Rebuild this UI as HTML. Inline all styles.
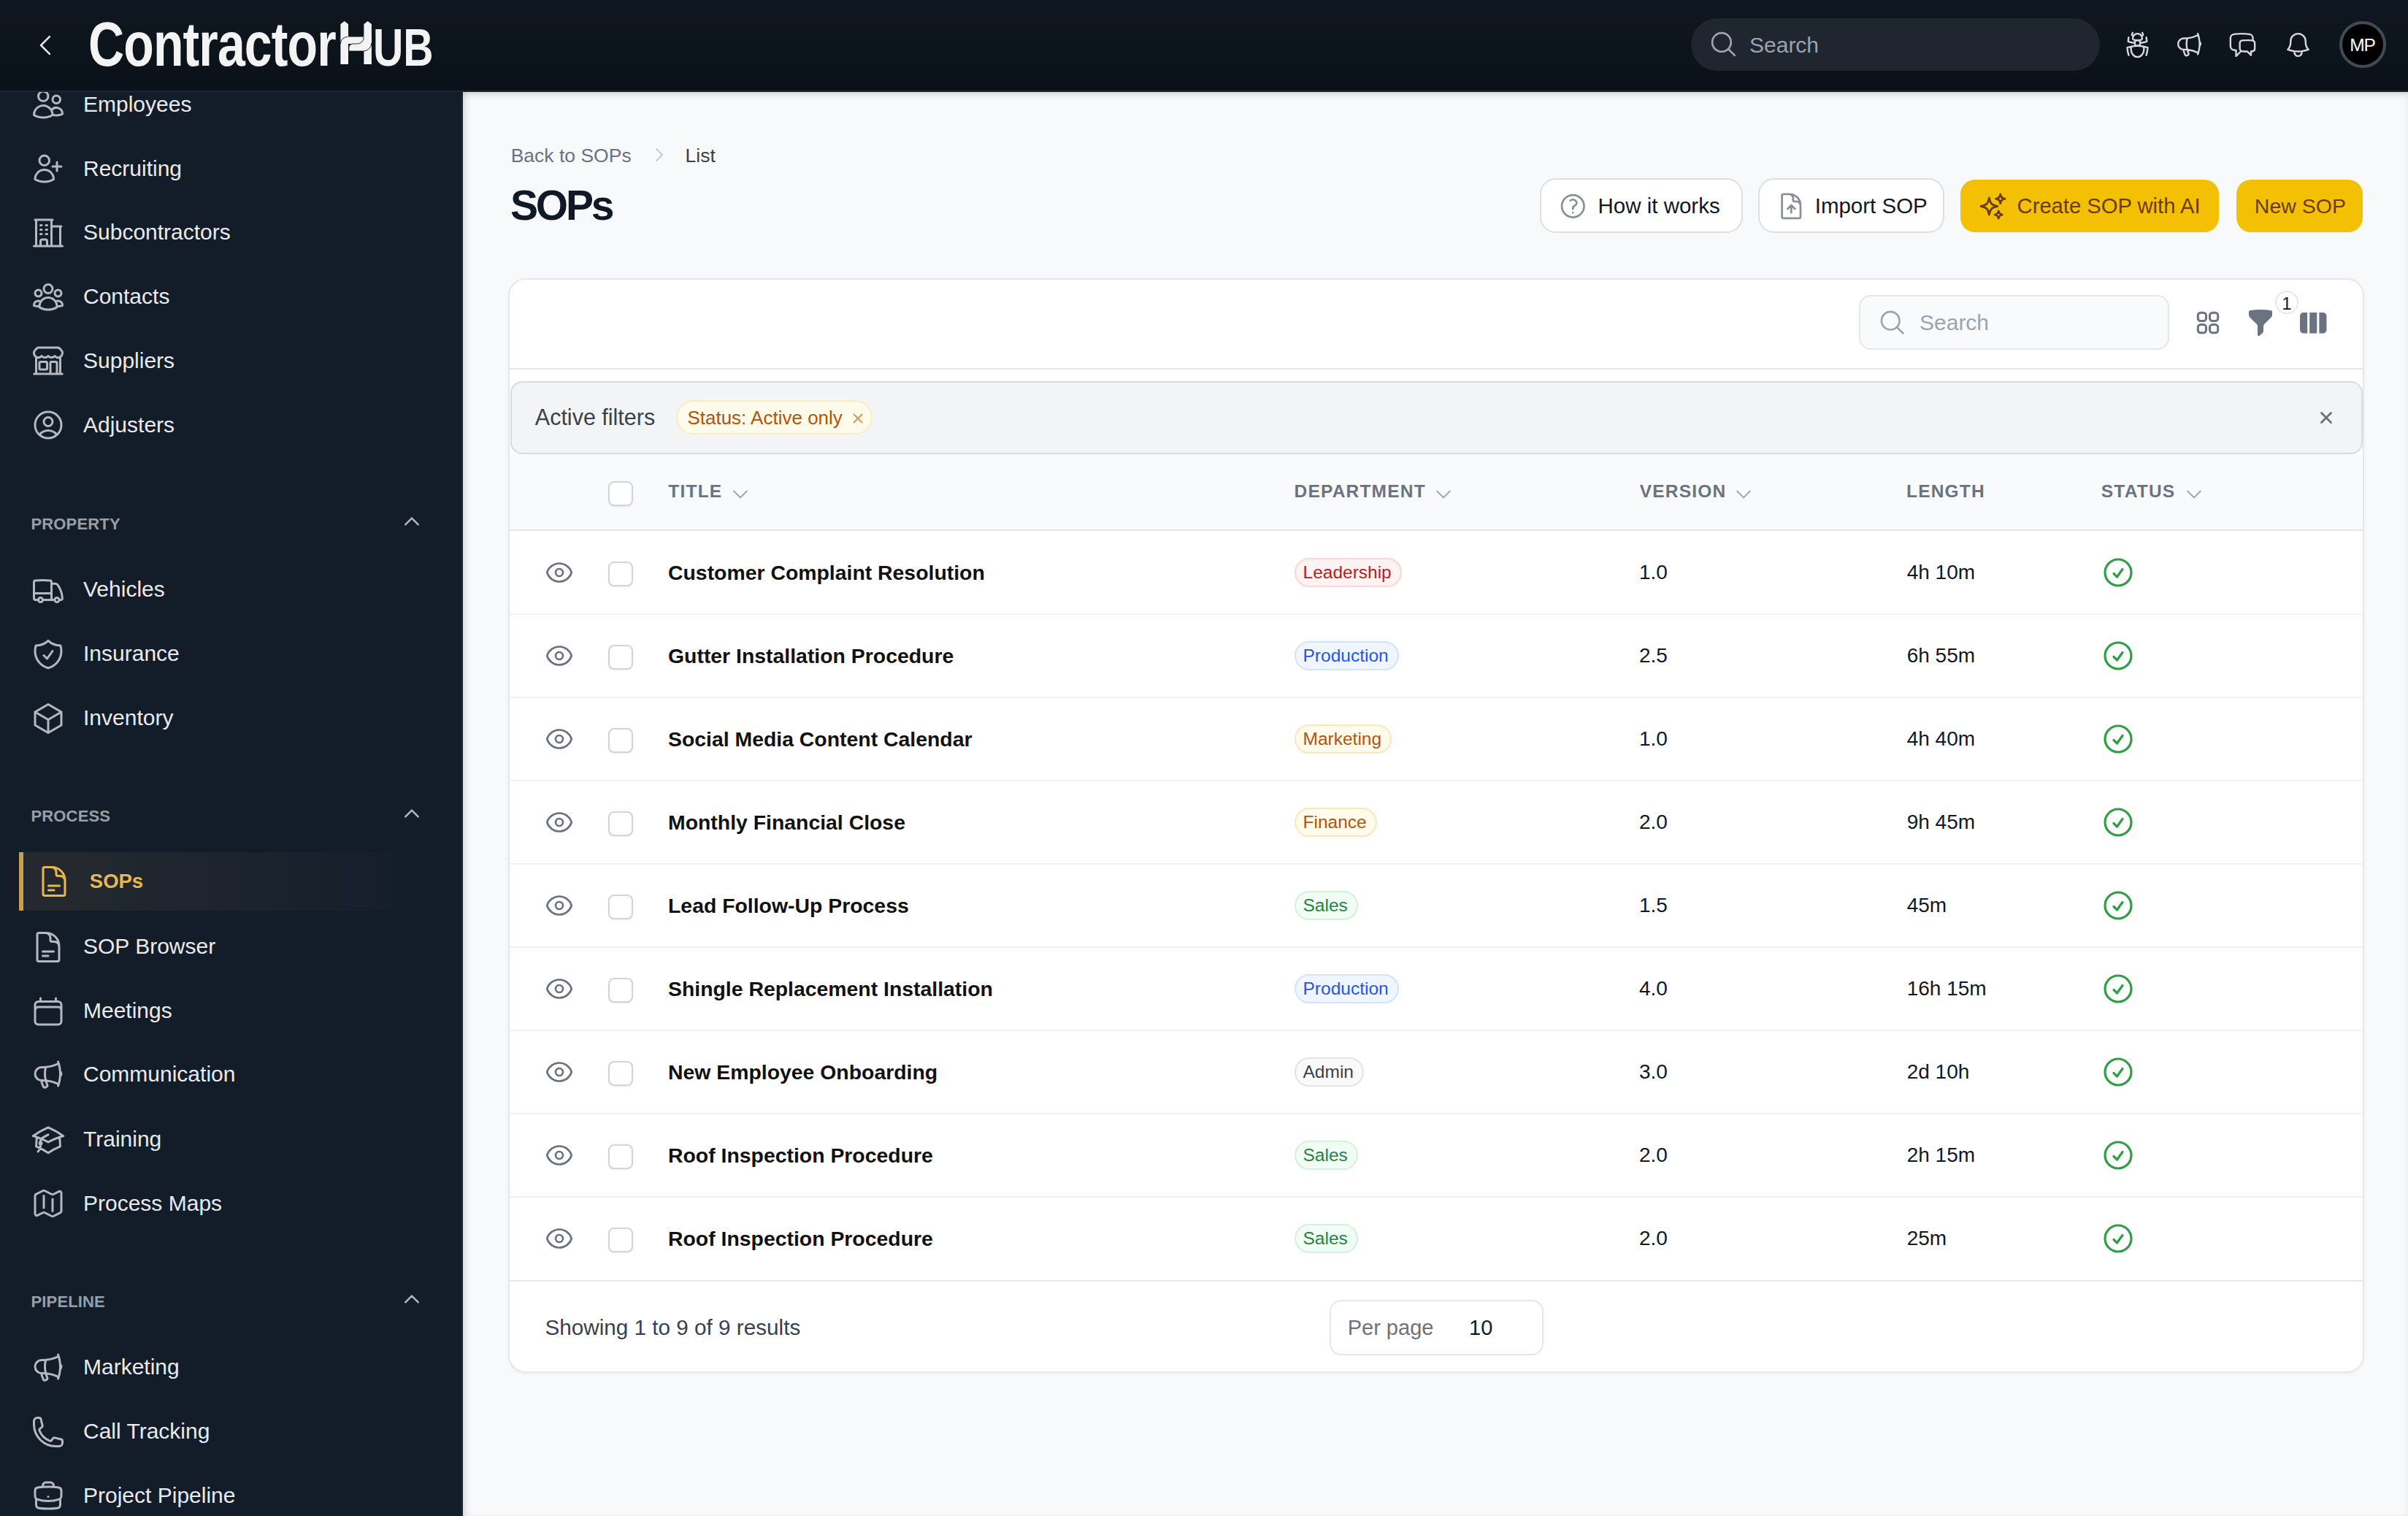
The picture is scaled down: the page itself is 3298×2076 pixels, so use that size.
<!DOCTYPE html><html><head><meta charset="utf-8"><title>SOPs</title><style>
*{margin:0;padding:0;box-sizing:border-box}
html,body{width:3298px;height:2076px;overflow:hidden;background:#f8f9fb;font-family:"Liberation Sans", sans-serif}
.t{position:absolute;line-height:1;white-space:nowrap}
.i{position:absolute;overflow:visible}
.b{position:absolute}
</style></head><body>
<div class="b" style="left:0;top:0;width:3298px;height:124px;background:linear-gradient(180deg,#0f1720 0%,#0a1118 100%)"></div>
<div class="b" style="left:0;top:124px;width:3298px;height:2px;background:#1c2631"></div>
<svg class="i" style="left:43px;top:43px;width:38px;height:38px;" viewBox="0 0 24 24" fill="none" stroke="#e5e7eb" stroke-width="1.6" stroke-linecap="round" stroke-linejoin="round"><path d="M15.75 19.5 8.25 12l7.5-7.5"/></svg>
<div class="t" style="left:120.5px;top:17.5px;font-size:85px;font-weight:700;color:#f3f3f3;letter-spacing:-1.1px;transform:scaleX(0.80);transform-origin:0 0">Contractor</div>
<svg class="i" style="left:455px;top:20px;width:60px;height:75px" viewBox="0 0 60 75"><g fill="#f3f3f3"><path d="M11.4 68 V12.9 L16.7 9 L22 12.9 V68 Z M43.4 68 V12.9 L48.7 9 L53.9 12.9 V68 Z"/><path d="M11.4 40 A9.6 9.6 0 0 1 21 30.4 L53.9 30.4 L53.9 40 L11.4 40 Z"/><path d="M22.9 50 L22.9 45.5 A5.5 5.5 0 0 1 28.4 40 L34.3 40 A9 9 0 0 0 43.3 31 L53.9 31 L53.9 38.5 A11.5 11.5 0 0 1 42.4 50 Z"/></g><g fill="none" stroke="#0b121a" stroke-width="0.9"><path d="M11.4 40 A9.6 9.6 0 0 1 21 30.4"/><path d="M22.9 50 L22.9 45.5 A5.5 5.5 0 0 1 28.4 40 L34.3 40 A9 9 0 0 0 43.3 31"/><path d="M53.9 38.5 A11.5 11.5 0 0 1 42.4 50 L22.9 50"/></g></svg>
<div class="t" style="left:510.5px;top:28.6px;font-size:72px;font-weight:700;color:#f3f3f3;letter-spacing:0px;transform:scaleX(0.795);transform-origin:0 0">UB</div>
<div class="b" style="left:2316px;top:25px;width:560px;height:72px;border-radius:36px;background:#1f262f"></div>
<svg class="i" style="left:2339.5px;top:39.8px;width:41px;height:41px;" viewBox="0 0 24 24" fill="none" stroke="#9ca3af" stroke-width="1.6" stroke-linecap="round" stroke-linejoin="round"><path d="m21 21-5.197-5.197m0 0A7.5 7.5 0 1 0 5.196 5.196a7.5 7.5 0 0 0 10.607 10.607Z"/></svg>
<div class="t" style="left:2396px;top:47.1px;font-size:30px;color:#9ca3af;">Search</div>
<svg class="i" style="left:2907px;top:40.5px;width:41px;height:41px;" viewBox="0 0 24 24" fill="none" stroke="#d6d8dc" stroke-width="1.4" stroke-linecap="round" stroke-linejoin="round"><path d="M12 12.75c1.148 0 2.278.08 3.383.237 1.037.146 1.866.966 1.866 2.013 0 3.728-2.35 6.75-5.25 6.75S6.75 18.728 6.75 15c0-1.046.83-1.867 1.866-2.013A24.204 24.204 0 0 1 12 12.75Zm0 0c2.883 0 5.647.508 8.207 1.440a23.91 23.91 0 0 1-1.152 6.06M12 12.75c-2.883 0-5.647.508-8.208 1.44.125 2.104.52 4.136 1.153 6.06M12 12.75a2.25 2.25 0 0 0 2.248-2.354M12 12.75a2.25 2.25 0 0 1-2.248-2.354M12 8.25c.995 0 1.971-.08 2.922-.236.403-.066.74-.358.795-.762a3.778 3.778 0 0 0-.399-2.25M12 8.25c-.995 0-1.97-.08-2.922-.236-.402-.066-.74-.358-.795-.762a3.734 3.734 0 0 1 .4-2.253M12 8.25a2.25 2.25 0 0 0-2.248 2.146M12 8.25a2.25 2.25 0 0 1 2.248 2.146M8.683 5a6.032 6.032 0 0 1-1.155-1.002c.07-.63.27-1.222.574-1.747m.581 2.749A3.75 3.75 0 0 1 15.318 5m0 0c.427-.283.815-.62 1.155-.999a4.471 4.471 0 0 0-.575-1.752M4.921 6a24.048 24.048 0 0 0-.392 3.314c1.668.546 3.416.914 5.223 1.082M19.08 6c.205 1.08.337 2.187.392 3.314a23.882 23.882 0 0 1-5.223 1.082"/></svg>
<svg class="i" style="left:2978px;top:40.5px;width:41px;height:41px;" viewBox="0 0 24 24" fill="none" stroke="#d6d8dc" stroke-width="1.4" stroke-linecap="round" stroke-linejoin="round"><path d="M10.34 15.84c-.688-.06-1.386-.09-2.09-.09H7.5a4.5 4.5 0 1 1 0-9h.75c.704 0 1.402-.03 2.09-.09m0 9.18c.253.962.584 1.892.985 2.783.247.55.06 1.21-.463 1.511l-.657.38c-.551.318-1.26.117-1.527-.461a20.845 20.845 0 0 1-1.44-4.282m3.102.069a18.03 18.03 0 0 1-.59-4.59c0-1.586.205-3.124.59-4.59m0 9.18a23.848 23.848 0 0 1 8.835 2.535M10.34 6.66a23.847 23.847 0 0 0 8.835-2.535m0 0A23.74 23.74 0 0 0 18.795 3m.38 1.125a23.91 23.91 0 0 1 1.014 5.395m-1.014 8.855c-.118.38-.245.754-.38 1.125m.38-1.125a23.91 23.91 0 0 0 1.014-5.395m0-3.46c.495.413.811 1.035.811 1.730 0 .695-.316 1.317-.811 1.73m0-3.46a24.347 24.347 0 0 1 0 3.46"/></svg>
<svg class="i" style="left:3051px;top:40.5px;width:41px;height:41px;" viewBox="0 0 24 24" fill="none" stroke="#d6d8dc" stroke-width="1.4" stroke-linecap="round" stroke-linejoin="round"><path d="M20.25 8.511c.884.284 1.5 1.128 1.5 2.097v4.286c0 1.136-.847 2.1-1.98 2.193-.34.027-.68.052-1.02.072v3.091l-3-3c-1.354 0-2.694-.055-4.020-.163a2.115 2.115 0 0 1-.825-.242m9.345-8.334a2.126 2.126 0 0 0-.476-.095 48.64 48.64 0 0 0-8.048 0c-1.131.094-1.976 1.057-1.976 2.192v4.286c0 .837.46 1.58 1.155 1.951m9.345-8.334V6.637c0-1.621-1.152-3.026-2.760-3.235A48.455 48.455 0 0 0 11.25 3c-2.115 0-4.198.137-6.240.402-1.608.209-2.76 1.614-2.76 3.235v6.226c0 1.621 1.152 3.026 2.76 3.235.577.075 1.157.14 1.740.194V21l4.155-4.155"/></svg>
<svg class="i" style="left:3127px;top:40.5px;width:41px;height:41px;" viewBox="0 0 24 24" fill="none" stroke="#d6d8dc" stroke-width="1.4" stroke-linecap="round" stroke-linejoin="round"><path d="M14.857 17.082a23.848 23.848 0 0 0 5.454-1.31A8.967 8.967 0 0 1 18 9.75V9A6 6 0 0 0 6 9v.75a8.967 8.967 0 0 1-2.312 6.022c1.733.64 3.56 1.085 5.455 1.31m5.714 0a24.255 24.255 0 0 1-5.714 0m5.714 0a3 3 0 1 1-5.714 0"/></svg>
<div class="b" style="left:3204px;top:29px;width:64px;height:64px;border-radius:50%;background:#000;border:4px solid #414a55"></div>
<div class="t" style="left:3204px;top:49.8px;font-size:24.5px;color:#ffffff;width:64px;text-align:center;letter-spacing:-1.2px;text-indent:-1px">MP</div>
<div class="b" style="left:0;top:126px;width:632px;height:1950px;background:#131d2a"></div>
<div class="b" style="left:632px;top:126px;width:2px;height:1950px;background:#1c2631"></div>
<div class="b" style="left:0;top:126px;width:632px;height:1950px;overflow:hidden">
<svg class="i" style="left:42px;top:-6.800000000000011px;width:48px;height:48px;" viewBox="0 0 24 24" fill="none" stroke="#b4b8bf" stroke-width="1.5" stroke-linecap="round" stroke-linejoin="round"><path d="M15 19.128a9.38 9.38 0 0 0 2.625.372 9.337 9.337 0 0 0 4.121-.952 4.125 4.125 0 0 0-7.533-2.493M15 19.128v-.003c0-1.113-.285-2.16-.786-3.07M15 19.128v.106A12.318 12.318 0 0 1 8.624 21c-2.331 0-4.512-.645-6.374-1.766l-.001-.109a6.375 6.375 0 0 1 11.964-3.07M12 6.375a3.375 3.375 0 1 1-6.75 0 3.375 3.375 0 0 1 6.75 0Zm8.25 2.25a2.625 2.625 0 1 1-5.25 0 2.625 2.625 0 0 1 5.25 0Z"/></svg>
<div class="t" style="left:114px;top:1.8px;font-size:30px;color:#e8eaed;">Employees</div>
<svg class="i" style="left:42px;top:81.0px;width:48px;height:48px;" viewBox="0 0 24 24" fill="none" stroke="#b4b8bf" stroke-width="1.5" stroke-linecap="round" stroke-linejoin="round"><path d="M18 7.5v3m0 0v3m0-3h3m-3 0h-3m-2.25-4.125a3.375 3.375 0 1 1-6.75 0 3.375 3.375 0 0 1 6.75 0ZM3 19.235v-.11a6.375 6.375 0 0 1 12.75 0v.109A12.318 12.318 0 0 1 9.374 21c-2.331 0-4.512-.645-6.374-1.766Z"/></svg>
<div class="t" style="left:114px;top:89.6px;font-size:30px;color:#e8eaed;">Recruiting</div>
<svg class="i" style="left:42px;top:168.60000000000002px;width:48px;height:48px;" viewBox="0 0 24 24" fill="none" stroke="#b4b8bf" stroke-width="1.5" stroke-linecap="round" stroke-linejoin="round"><path d="M2.25 21h19.5m-18-18v18m10.5-18v18m6-13.5V21M6.75 6.75h.75m-.75 3h.75m-.75 3h.75m3-6h.75m-.75 3h.75m-.75 3h.75M6.75 21v-3.375c0-.621.504-1.125 1.125-1.125h2.25c.621 0 1.125.504 1.125 1.125V21M3 3h12m-.75 4.5H21"/></svg>
<div class="t" style="left:114px;top:177.2px;font-size:30px;color:#e8eaed;">Subcontractors</div>
<svg class="i" style="left:42px;top:256.4px;width:48px;height:48px;" viewBox="0 0 24 24" fill="none" stroke="#b4b8bf" stroke-width="1.5" stroke-linecap="round" stroke-linejoin="round"><path d="M18 18.72a9.094 9.094 0 0 0 3.741-.479 3 3 0 0 0-4.682-2.72m.94 3.198.001.031c0 .225-.012.447-.037.666A11.944 11.944 0 0 1 12 21c-2.17 0-4.207-.576-5.963-1.584A6.062 6.062 0 0 1 6 18.719m12 0a5.971 5.971 0 0 0-.941-3.197m0 0A5.995 5.995 0 0 0 12 12.75a5.995 5.995 0 0 0-5.058 2.772m0 0a3 3 0 0 0-4.681 2.72 8.986 8.986 0 0 0 3.74.477m.94-3.197a5.971 5.971 0 0 0-.94 3.197M15 6.75a3 3 0 1 1-6 0 3 3 0 0 1 6 0Zm6 3a2.25 2.25 0 1 1-4.5 0 2.25 2.25 0 0 1 4.5 0Zm-13.5 0a2.25 2.25 0 1 1-4.5 0 2.25 2.25 0 0 1 4.5 0Z"/></svg>
<div class="t" style="left:114px;top:265.0px;font-size:30px;color:#e8eaed;">Contacts</div>
<svg class="i" style="left:42px;top:344.2px;width:48px;height:48px;" viewBox="0 0 24 24" fill="none" stroke="#b4b8bf" stroke-width="1.5" stroke-linecap="round" stroke-linejoin="round"><path d="M13.5 21v-7.5a.75.75 0 0 1 .75-.75h3a.75.75 0 0 1 .75.75V21m-4.5 0H2.36m11.14 0H18m0 0h3.64m-1.39 0V9.349M3.75 21V9.349m0 0a3.001 3.001 0 0 0 3.75-.615A2.993 2.993 0 0 0 9.75 9.75c.896 0 1.7-.393 2.25-1.016a2.993 2.993 0 0 0 2.25 1.016c.896 0 1.7-.393 2.25-1.016a3.001 3.001 0 0 0 3.75.614m-16.5 0a3.004 3.004 0 0 1-.621-4.72l1.189-1.19A1.5 1.5 0 0 1 5.378 3h13.243a1.5 1.5 0 0 1 1.06.44l1.19 1.189a3 3 0 0 1-.621 4.72M6.75 18h3.75a.75.75 0 0 0 .75-.75V13.5a.75.75 0 0 0-.75-.75H6.75a.75.75 0 0 0-.75.75v3.75c0 .414.336.75.75.75Z"/></svg>
<div class="t" style="left:114px;top:352.8px;font-size:30px;color:#e8eaed;">Suppliers</div>
<svg class="i" style="left:42px;top:432.0px;width:48px;height:48px;" viewBox="0 0 24 24" fill="none" stroke="#b4b8bf" stroke-width="1.5" stroke-linecap="round" stroke-linejoin="round"><path d="M17.982 18.725A7.488 7.488 0 0 0 12 15.75a7.488 7.488 0 0 0-5.982 2.975m11.963 0a9 9 0 1 0-11.963 0m11.962 0A8.966 8.966 0 0 1 12 21a8.966 8.966 0 0 1-5.982-2.275M15 9.75a3 3 0 1 1-6 0 3 3 0 0 1 6 0Z"/></svg>
<div class="t" style="left:114px;top:440.6px;font-size:30px;color:#e8eaed;">Adjusters</div>
<svg class="i" style="left:42px;top:657.6px;width:48px;height:48px;" viewBox="0 0 24 24" fill="none" stroke="#b4b8bf" stroke-width="1.5" stroke-linecap="round" stroke-linejoin="round"><path d="M8.25 18.75a1.5 1.5 0 0 1-3 0m3 0a1.5 1.5 0 0 0-3 0m3 0h6m-9 0H3.375a1.125 1.125 0 0 1-1.125-1.125V14.25m17.25 4.5a1.5 1.5 0 0 1-3 0m3 0a1.5 1.5 0 0 0-3 0m3 0h1.125c.621 0 1.129-.504 1.09-1.124a17.902 17.902 0 0 0-3.213-9.193 2.056 2.056 0 0 0-1.58-.86H14.25M16.5 18.75h-2.25m0-11.177v-.958c0-.568-.422-1.048-.987-1.106a48.554 48.554 0 0 0-10.026 0 1.106 1.106 0 0 0-.987 1.106v7.635m12-6.677v6.677m0 4.5v-4.5m0 0h-12"/></svg>
<div class="t" style="left:114px;top:666.2px;font-size:30px;color:#e8eaed;">Vehicles</div>
<svg class="i" style="left:42px;top:745.6px;width:48px;height:48px;" viewBox="0 0 24 24" fill="none" stroke="#b4b8bf" stroke-width="1.5" stroke-linecap="round" stroke-linejoin="round"><path d="M9 12.75 11.25 15 15 9.75m-3-7.036A11.959 11.959 0 0 1 3.598 6 11.99 11.99 0 0 0 3 9.749c0 5.592 3.824 10.29 9 11.623 5.176-1.332 9-6.03 9-11.622 0-1.31-.21-2.571-.598-3.751h-.152c-3.196 0-6.1-1.248-8.25-3.285Z"/></svg>
<div class="t" style="left:114px;top:754.2px;font-size:30px;color:#e8eaed;">Insurance</div>
<svg class="i" style="left:42px;top:833.5px;width:48px;height:48px;" viewBox="0 0 24 24" fill="none" stroke="#b4b8bf" stroke-width="1.5" stroke-linecap="round" stroke-linejoin="round"><path d="m21 7.5-9-5.25L3 7.5m18 0-9 5.25m9-5.25v9l-9 5.25M3 7.5l9 5.25M3 7.5v9l9 5.25m0-9v9"/></svg>
<div class="t" style="left:114px;top:842.1px;font-size:30px;color:#e8eaed;">Inventory</div>
<svg class="i" style="left:42px;top:1146.8px;width:48px;height:48px;" viewBox="0 0 24 24" fill="none" stroke="#b4b8bf" stroke-width="1.5" stroke-linecap="round" stroke-linejoin="round"><path d="M19.5 14.25v-2.625a3.375 3.375 0 0 0-3.375-3.375h-1.5A1.125 1.125 0 0 1 13.5 7.125v-1.5a3.375 3.375 0 0 0-3.375-3.375H8.25m0 12.75h7.5m-7.5 3H12M10.5 2.25H5.625c-.621 0-1.125.504-1.125 1.125v17.25c0 .621.504 1.125 1.125 1.125h12.75c.621 0 1.125-.504 1.125-1.125V11.25a9 9 0 0 0-9-9Z"/></svg>
<div class="t" style="left:114px;top:1155.4px;font-size:30px;color:#e8eaed;">SOP Browser</div>
<svg class="i" style="left:42px;top:1234.6px;width:48px;height:48px;" viewBox="0 0 24 24" fill="none" stroke="#b4b8bf" stroke-width="1.5" stroke-linecap="round" stroke-linejoin="round"><path d="M6.75 3v2.25M17.25 3v2.25M3 18.75V7.5a2.25 2.25 0 0 1 2.25-2.25h13.5A2.25 2.25 0 0 1 21 7.5v11.25m-18 0A2.25 2.25 0 0 0 5.25 21h13.5A2.25 2.25 0 0 0 21 18.75m-18 0v-7.5A2.25 2.25 0 0 1 5.25 9h13.5A2.25 2.25 0 0 1 21 11.25v7.5"/></svg>
<div class="t" style="left:114px;top:1243.2px;font-size:30px;color:#e8eaed;">Meetings</div>
<svg class="i" style="left:42px;top:1321.8px;width:48px;height:48px;" viewBox="0 0 24 24" fill="none" stroke="#b4b8bf" stroke-width="1.5" stroke-linecap="round" stroke-linejoin="round"><path d="M10.34 15.84c-.688-.06-1.386-.09-2.09-.09H7.5a4.5 4.5 0 1 1 0-9h.75c.704 0 1.402-.03 2.09-.09m0 9.18c.253.962.584 1.892.985 2.783.247.55.06 1.21-.463 1.511l-.657.38c-.551.318-1.26.117-1.527-.461a20.845 20.845 0 0 1-1.44-4.282m3.102.069a18.03 18.03 0 0 1-.59-4.59c0-1.586.205-3.124.59-4.59m0 9.18a23.848 23.848 0 0 1 8.835 2.535M10.34 6.66a23.847 23.847 0 0 0 8.835-2.535m0 0A23.74 23.74 0 0 0 18.795 3m.38 1.125a23.91 23.91 0 0 1 1.014 5.395m-1.014 8.855c-.118.38-.245.754-.38 1.125m.38-1.125a23.91 23.91 0 0 0 1.014-5.395m0-3.46c.495.413.811 1.035.811 1.730 0 .695-.316 1.317-.811 1.73m0-3.46a24.347 24.347 0 0 1 0 3.46"/></svg>
<div class="t" style="left:114px;top:1330.4px;font-size:30px;color:#e8eaed;">Communication</div>
<svg class="i" style="left:42px;top:1410.6px;width:48px;height:48px;" viewBox="0 0 24 24" fill="none" stroke="#b4b8bf" stroke-width="1.5" stroke-linecap="round" stroke-linejoin="round"><path d="M4.26 10.147a60.438 60.438 0 0 0-.491 6.347A48.62 48.62 0 0 1 12 20.904a48.62 48.62 0 0 1 8.232-4.41 60.46 60.46 0 0 0-.491-6.347m-15.482 0a50.636 50.636 0 0 0-2.658-.813A59.906 59.906 0 0 1 12 3.493a59.903 59.903 0 0 1 10.399 5.84c-.896.248-1.783.52-2.658.814m-15.482 0A50.717 50.717 0 0 1 12 13.489a50.702 50.702 0 0 1 7.74-3.342M6.75 15a.75.75 0 1 0 0-1.5.75.75 0 0 0 0 1.5Zm0 0v-3.675A55.378 55.378 0 0 1 12 8.443m-7.007 11.55A5.981 5.981 0 0 0 6.75 15.75v-1.5"/></svg>
<div class="t" style="left:114px;top:1419.2px;font-size:30px;color:#e8eaed;">Training</div>
<svg class="i" style="left:42px;top:1498.4px;width:48px;height:48px;" viewBox="0 0 24 24" fill="none" stroke="#b4b8bf" stroke-width="1.5" stroke-linecap="round" stroke-linejoin="round"><path d="M9 6.75V15m6-6v8.25m.503 3.498 4.875-2.437c.381-.19.622-.58.622-1.006V4.82c0-.836-.88-1.38-1.628-1.006l-3.869 1.934c-.317.159-.69.159-1.006 0L9.503 3.252a1.125 1.125 0 0 0-1.006 0L3.622 5.689C3.24 5.88 3 6.27 3 6.695V19.18c0 .836.88 1.38 1.628 1.006l3.869-1.934c.317-.159.69-.159 1.006 0l4.994 2.497c.317.158.69.158 1.006 0Z"/></svg>
<div class="t" style="left:114px;top:1507.0px;font-size:30px;color:#e8eaed;">Process Maps</div>
<svg class="i" style="left:42px;top:1722.8px;width:48px;height:48px;" viewBox="0 0 24 24" fill="none" stroke="#b4b8bf" stroke-width="1.5" stroke-linecap="round" stroke-linejoin="round"><path d="M10.34 15.84c-.688-.06-1.386-.09-2.09-.09H7.5a4.5 4.5 0 1 1 0-9h.75c.704 0 1.402-.03 2.09-.09m0 9.18c.253.962.584 1.892.985 2.783.247.55.06 1.21-.463 1.511l-.657.38c-.551.318-1.26.117-1.527-.461a20.845 20.845 0 0 1-1.44-4.282m3.102.069a18.03 18.03 0 0 1-.59-4.59c0-1.586.205-3.124.59-4.59m0 9.18a23.848 23.848 0 0 1 8.835 2.535M10.34 6.66a23.847 23.847 0 0 0 8.835-2.535m0 0A23.74 23.74 0 0 0 18.795 3m.38 1.125a23.91 23.91 0 0 1 1.014 5.395m-1.014 8.855c-.118.38-.245.754-.38 1.125m.38-1.125a23.91 23.91 0 0 0 1.014-5.395m0-3.46c.495.413.811 1.035.811 1.730 0 .695-.316 1.317-.811 1.73m0-3.46a24.347 24.347 0 0 1 0 3.46"/></svg>
<div class="t" style="left:114px;top:1731.4px;font-size:30px;color:#e8eaed;">Marketing</div>
<svg class="i" style="left:42px;top:1810.6px;width:48px;height:48px;" viewBox="0 0 24 24" fill="none" stroke="#b4b8bf" stroke-width="1.5" stroke-linecap="round" stroke-linejoin="round"><path d="M2.25 6.75c0 8.284 6.716 15 15 15h2.25a2.25 2.25 0 0 0 2.25-2.25v-1.372c0-.516-.351-.966-.852-1.091l-4.423-1.106c-.44-.11-.902.055-1.173.417l-.97 1.293c-.282.376-.769.542-1.21.38a12.035 12.035 0 0 1-7.143-7.143c-.162-.441.004-.928.38-1.21l1.293-.97c.363-.271.527-.734.417-1.173L6.963 3.102a1.125 1.125 0 0 0-1.091-.852H4.5A2.25 2.25 0 0 0 2.25 4.5v2.25Z"/></svg>
<div class="t" style="left:114px;top:1819.2px;font-size:30px;color:#e8eaed;">Call Tracking</div>
<svg class="i" style="left:42px;top:1898.3000000000002px;width:48px;height:48px;" viewBox="0 0 24 24" fill="none" stroke="#b4b8bf" stroke-width="1.5" stroke-linecap="round" stroke-linejoin="round"><path d="M20.25 14.15v4.25c0 1.094-.787 2.036-1.872 2.18-2.087.277-4.216.42-6.378.42s-4.291-.143-6.378-.42c-1.085-.144-1.872-1.086-1.872-2.18v-4.25m16.5 0a2.18 2.18 0 0 0 .75-1.661V8.706c0-1.081-.768-2.015-1.837-2.175a48.114 48.114 0 0 0-3.413-.387m4.5 8.006c-.194.165-.42.295-.673.38A23.978 23.978 0 0 1 12 15.75c-2.648 0-5.195-.429-7.577-1.22a2.016 2.016 0 0 1-.673-.38m0 0A2.18 2.18 0 0 1 3 12.489V8.706c0-1.081.768-2.015 1.837-2.175a48.111 48.111 0 0 1 3.413-.387m7.5 0V5.25A2.25 2.25 0 0 0 13.5 3h-3a2.25 2.25 0 0 0-2.25 2.25v.894m7.5 0a48.667 48.667 0 0 0-7.5 0M12 12.75h.008v.008H12v-.008Z"/></svg>
<div class="t" style="left:114px;top:1906.9px;font-size:30px;color:#e8eaed;">Project Pipeline</div>
<div class="t" style="left:42.5px;top:581.3px;font-size:22px;color:#989ea7;font-weight:700;letter-spacing:0.15px">PROPERTY</div>
<svg class="i" style="left:550px;top:574.4px;width:28px;height:28px;" viewBox="0 0 24 24" fill="none" stroke="#b4b6c0" stroke-width="2.1" stroke-linecap="round" stroke-linejoin="round"><path d="m4.5 15.75 7.5-7.5 7.5 7.5"/></svg>
<div class="t" style="left:42.5px;top:981.2px;font-size:22px;color:#989ea7;font-weight:700;letter-spacing:0.15px">PROCESS</div>
<svg class="i" style="left:550px;top:974.3px;width:28px;height:28px;" viewBox="0 0 24 24" fill="none" stroke="#b4b6c0" stroke-width="2.1" stroke-linecap="round" stroke-linejoin="round"><path d="m4.5 15.75 7.5-7.5 7.5 7.5"/></svg>
<div class="t" style="left:42.5px;top:1645.8px;font-size:22px;color:#989ea7;font-weight:700;letter-spacing:0.15px">PIPELINE</div>
<svg class="i" style="left:550px;top:1638.9px;width:28px;height:28px;" viewBox="0 0 24 24" fill="none" stroke="#b4b6c0" stroke-width="2.1" stroke-linecap="round" stroke-linejoin="round"><path d="m4.5 15.75 7.5-7.5 7.5 7.5"/></svg>
<div class="b" style="left:26px;top:1041px;width:606px;height:80px;background:linear-gradient(90deg,#262a2f 0%,#1e252e 40%,#131d2a 92%)"></div>
<div class="b" style="left:26px;top:1041px;width:6px;height:80px;background:#c9a04a"></div>
<svg class="i" style="left:50px;top:1057px;width:48px;height:48px;" viewBox="0 0 24 24" fill="none" stroke="#e6b84c" stroke-width="1.5" stroke-linecap="round" stroke-linejoin="round"><path d="M19.5 14.25v-2.625a3.375 3.375 0 0 0-3.375-3.375h-1.5A1.125 1.125 0 0 1 13.5 7.125v-1.5a3.375 3.375 0 0 0-3.375-3.375H8.25m0 12.75h7.5m-7.5 3H12M10.5 2.25H5.625c-.621 0-1.125.504-1.125 1.125v17.25c0 .621.504 1.125 1.125 1.125h12.75c.621 0 1.125-.504 1.125-1.125V11.25a9 9 0 0 0-9-9Z"/></svg>
<div class="t" style="left:122.8px;top:1067.1px;font-size:27.5px;color:#e8b84a;font-weight:700;">SOPs</div>
</div>
<div class="b" style="left:634px;top:126px;width:2664px;height:1950px;background:#f8f9fb;box-shadow:inset 0 7px 12px -5px rgba(0,0,0,0.16),inset 7px 0 12px -5px rgba(0,0,0,0.14)"></div>
<div class="t" style="left:699.7px;top:199.9px;font-size:26.5px;color:#6b7280;">Back to SOPs</div>
<svg class="i" style="left:890px;top:199px;width:26px;height:26px;" viewBox="0 0 24 24" fill="none" stroke="#c4c8ce" stroke-width="1.8" stroke-linecap="round" stroke-linejoin="round"><path d="m8.25 4.5 7.5 7.5-7.5 7.5"/></svg>
<div class="t" style="left:938.5px;top:199.9px;font-size:26.5px;color:#374151;">List</div>
<div class="t" style="left:699px;top:252.9px;font-size:57px;color:#111827;font-weight:700;letter-spacing:-3.2px">SOPs</div>
<div class="b" style="left:2109px;top:244px;width:278px;height:75px;border-radius:22px;background:#fff;border:2px solid #dcdfe4"></div>
<svg class="i" style="left:2134.2999999999997px;top:261.7px;width:40.6px;height:40.6px;" viewBox="0 0 24 24" fill="none" stroke="#8b8f98" stroke-width="1.6" stroke-linecap="round" stroke-linejoin="round"><path d="M9.879 7.519c1.171-1.025 3.071-1.025 4.242 0 1.172 1.025 1.172 2.687 0 3.712-.203.179-.43.326-.67.442-.745.361-1.45.999-1.45 1.827v.75M21 12a9 9 0 1 1-18 0 9 9 0 0 1 18 0Zm-9 5.250h.008v.008H12v-.008Z"/></svg>
<div class="t" style="left:2188.5px;top:267.3px;font-size:29.5px;color:#111827;">How it works</div>
<div class="b" style="left:2408px;top:244px;width:255px;height:75px;border-radius:22px;background:#fff;border:2px solid #dcdfe4"></div>
<svg class="i" style="left:2432.7px;top:261.7px;width:40.6px;height:40.6px;" viewBox="0 0 24 24" fill="none" stroke="#8b8f98" stroke-width="1.6" stroke-linecap="round" stroke-linejoin="round"><path d="M19.5 14.25v-2.625a3.375 3.375 0 0 0-3.375-3.375h-1.5A1.125 1.125 0 0 1 13.5 7.125v-1.5a3.375 3.375 0 0 0-3.375-3.375H8.25m6.75 12-3-3m0 0-3 3m3-3v6m-1.5-15H5.625c-.621 0-1.125.504-1.125 1.125v17.25c0 .621.504 1.125 1.125 1.125h12.75c.621 0 1.125-.504 1.125-1.125V11.25a9 9 0 0 0-9-9Z"/></svg>
<div class="t" style="left:2485.7px;top:267.3px;font-size:29.5px;color:#111827;">Import SOP</div>
<div class="b" style="left:2685px;top:246px;width:354px;height:72px;border-radius:20px;background:#f3c004"></div>
<svg class="i" style="left:2708.5px;top:261.7px;width:41px;height:41px;" viewBox="0 0 24 24" fill="none" stroke="#6b3c12" stroke-width="1.6" stroke-linecap="round" stroke-linejoin="round"><path d="M9.813 15.904 9 18.75l-.813-2.846a4.5 4.5 0 0 0-3.09-3.09L2.25 12l2.846-.813a4.5 4.5 0 0 0 3.09-3.09L9 5.25l.813 2.846a4.5 4.5 0 0 0 3.09 3.090L15.75 12l-2.846.813a4.5 4.5 0 0 0-3.09 3.091ZM18.259 8.715 18 9.75l-.259-1.035a3.375 3.375 0 0 0-2.455-2.456L14.25 6l1.036-.259a3.375 3.375 0 0 0 2.455-2.456L18 2.25l.259 1.035a3.375 3.375 0 0 0 2.456 2.456L21.75 6l-1.035.259a3.375 3.375 0 0 0-2.456 2.456ZM16.894 20.567 16.5 21.75l-.394-1.183a2.25 2.25 0 0 0-1.423-1.423L13.5 18.75l1.183-.394a2.25 2.25 0 0 0 1.423-1.423l.394-1.183.394 1.183a2.25 2.25 0 0 0 1.423 1.423l1.183.394-1.183.394a2.25 2.25 0 0 0-1.423 1.423Z"/></svg>
<div class="t" style="left:2762.6px;top:267.6px;font-size:29.2px;color:#6b3c12;">Create SOP with AI</div>
<div class="b" style="left:3063px;top:246px;width:173px;height:72px;border-radius:20px;background:#f3c004"></div>
<div class="t" style="left:3087.8px;top:268.2px;font-size:28.5px;color:#6b3c12;">New SOP</div>
<div class="b" style="left:696px;top:381px;width:2542px;height:1499px;border-radius:24px;background:#fff;border:2px solid #e5e7eb;box-shadow:0 2px 4px rgba(0,0,0,0.04);overflow:hidden">
<div class="b" style="left:0;top:121px;width:2540px;height:2px;background:#e5e7eb"></div>
<div class="b" style="left:1848px;top:21px;width:425px;height:75px;border-radius:16px;background:#f9fafb;border:2px solid #e5e7eb"></div>
<svg class="i" style="left:1874.3000000000002px;top:39.30000000000001px;width:39.4px;height:39.4px;" viewBox="0 0 24 24" fill="none" stroke="#9ca3af" stroke-width="1.6" stroke-linecap="round" stroke-linejoin="round"><path d="m21 21-5.197-5.197m0 0A7.5 7.5 0 1 0 5.196 5.196a7.5 7.5 0 0 0 10.607 10.607Z"/></svg>
<div class="t" style="left:1931px;top:43.6px;font-size:30px;color:#9ca3af;">Search</div>
<svg class="i" style="left:2306px;top:39.39999999999998px;width:40px;height:40px;" viewBox="0 0 24 24" fill="none" stroke="#6b7280" stroke-width="1.8" stroke-linecap="round" stroke-linejoin="round"><path d="M3.75 6A2.25 2.25 0 0 1 6 3.75h2.25A2.25 2.25 0 0 1 10.5 6v2.25a2.25 2.25 0 0 1-2.25 2.25H6a2.25 2.25 0 0 1-2.25-2.250V6ZM3.75 15.75A2.25 2.25 0 0 1 6 13.5h2.25a2.25 2.25 0 0 1 2.25 2.25V18a2.25 2.25 0 0 1-2.25 2.25H6A2.25 2.25 0 0 1 3.75 18v-2.25ZM13.5 6a2.25 2.25 0 0 1 2.25-2.25H18A2.25 2.25 0 0 1 20.25 6v2.25A2.25 2.25 0 0 1 18 10.5h-2.25a2.25 2.25 0 0 1-2.25-2.25V6ZM13.5 15.75a2.25 2.25 0 0 1 2.25-2.25H18a2.25 2.25 0 0 1 2.25 2.25V18A2.25 2.25 0 0 1 18 20.25h-2.25A2.25 2.25 0 0 1 13.5 18v-2.25Z"/></svg>
<svg class="i" style="left:2378px;top:38.80000000000001px;width:40px;height:40px;" viewBox="0 0 20 20"><path fill="#6b7280" d="M2.628 1.601C5.028 1.206 7.49 1 10 1s4.973.206 7.372.601a.75.75 0 0 1 .628.74v2.288a2.25 2.25 0 0 1-.659 1.59l-4.682 4.683a2.25 2.25 0 0 0-.659 1.59v3.037c0 .684-.31 1.33-.844 1.757l-1.937 1.55A.75.75 0 0 1 8 18.25v-5.757a2.25 2.25 0 0 0-.659-1.591L2.659 6.22A2.25 2.25 0 0 1 2 4.629V2.34a.75.75 0 0 1 .628-.74Z"/></svg>
<div class="b" style="left:2418px;top:15px;width:32px;height:32px;border-radius:50%;background:#fff;border:2px solid #e5e7eb"></div>
<div class="t" style="left:2418px;top:20.7px;font-size:24px;color:#111827;width:32px;text-align:center">1</div>
<svg class="i" style="left:2449.55px;top:38.55000000000001px;width:40.5px;height:40.5px;" viewBox="0 0 20 20"><path fill="#6b7280" d="M14 17h2.75A2.25 2.25 0 0 0 19 14.75v-9.5A2.25 2.25 0 0 0 16.75 3H14v14ZM12.5 3h-5v14h5V3ZM3.25 3H6v14H3.25A2.25 2.25 0 0 1 1 14.75v-9.5A2.25 2.25 0 0 1 3.25 3Z"/></svg>
<div class="b" style="left:1px;top:139px;width:2537px;height:100px;border-radius:16px;background:#f3f4f6;border:2px solid #d8dbe0"></div>
<div class="t" style="left:34.799999999999955px;top:173.0px;font-size:30.5px;color:#374151;">Active filters</div>
<div class="b" style="left:227.60000000000002px;top:165.39999999999998px;width:269px;height:47px;border-radius:24px;background:#fffbeb;border:2px solid #fcebc0"></div>
<div class="t" style="left:243.39999999999998px;top:175.5px;font-size:26px;color:#b45309;">Status: Active only</div>
<svg class="i" style="left:466px;top:179px;width:22px;height:22px;" viewBox="0 0 24 24" fill="none" stroke="#d4975a" stroke-width="2.2" stroke-linecap="round" stroke-linejoin="round"><path d="M6 18 18 6M6 6l12 12"/></svg>
<svg class="i" style="left:2475px;top:176px;width:26px;height:26px;" viewBox="0 0 24 24" fill="none" stroke="#6b6e76" stroke-width="2.6" stroke-linecap="round" stroke-linejoin="round"><path d="M6 18 18 6M6 6l12 12"/></svg>
<div class="b" style="left:0;top:239px;width:2540px;height:103px;background:#f9fafb"></div>
<div class="b" style="left:0;top:342px;width:2540px;height:2px;background:#e5e7eb"></div>
<div class="b" style="left:135px;top:276px;width:34px;height:34px;border-radius:8px;background:#fff;border:2px solid #d1d5db;box-shadow:0 1px 2px rgba(0,0,0,0.08)"></div>
<div class="t" style="left:217.29999999999995px;top:278.1px;font-size:24.5px;color:#6b7280;font-weight:700;letter-spacing:1.2px">TITLE</div>
<svg class="i" style="left:302px;top:280px;width:28px;height:28px;" viewBox="0 0 24 24" fill="none" stroke="#9ca3af" stroke-width="1.8" stroke-linecap="round" stroke-linejoin="round"><path d="m19.5 8.25-7.5 7.5-7.5-7.5"/></svg>
<div class="t" style="left:1074.5px;top:278.1px;font-size:24.5px;color:#6b7280;font-weight:700;letter-spacing:1.2px">DEPARTMENT</div>
<svg class="i" style="left:1264.6px;top:280px;width:28px;height:28px;" viewBox="0 0 24 24" fill="none" stroke="#9ca3af" stroke-width="1.8" stroke-linecap="round" stroke-linejoin="round"><path d="m19.5 8.25-7.5 7.5-7.5-7.5"/></svg>
<div class="t" style="left:1547.6999999999998px;top:278.1px;font-size:24.5px;color:#6b7280;font-weight:700;letter-spacing:1.2px">VERSION</div>
<svg class="i" style="left:1675.6px;top:280px;width:28px;height:28px;" viewBox="0 0 24 24" fill="none" stroke="#9ca3af" stroke-width="1.8" stroke-linecap="round" stroke-linejoin="round"><path d="m19.5 8.25-7.5 7.5-7.5-7.5"/></svg>
<div class="t" style="left:1913px;top:278.1px;font-size:24.5px;color:#6b7280;font-weight:700;letter-spacing:1.2px">LENGTH</div>
<div class="t" style="left:2179.8px;top:278.1px;font-size:24.5px;color:#6b7280;font-weight:700;letter-spacing:1.2px">STATUS</div>
<svg class="i" style="left:2293px;top:280px;width:28px;height:28px;" viewBox="0 0 24 24" fill="none" stroke="#9ca3af" stroke-width="1.8" stroke-linecap="round" stroke-linejoin="round"><path d="m19.5 8.25-7.5 7.5-7.5-7.5"/></svg>
<div class="b" style="left:0;top:457px;width:2540px;height:2px;background:#f1f2f4"></div>
<svg class="i" style="left:48px;top:381px;width:40px;height:40px;" viewBox="0 0 24 24" fill="none" stroke="#6b7280" stroke-width="1.6" stroke-linecap="round" stroke-linejoin="round"><path d="M2.036 12.322a1.012 1.012 0 0 1 0-.639C3.423 7.51 7.36 4.5 12 4.5c4.638 0 8.573 3.007 9.963 7.178.07.207.07.431 0 .639C20.577 16.49 16.64 19.5 12 19.5c-4.638 0-8.573-3.007-9.963-7.178Z M15 12a3 3 0 1 1-6 0 3 3 0 0 1 6 0Z"/></svg>
<div class="b" style="left:135px;top:385.5px;width:34px;height:34px;border-radius:8px;background:#fff;border:2px solid #d1d5db;box-shadow:0 1px 2px rgba(0,0,0,0.08)"></div>
<div class="t" style="left:217px;top:387.4px;font-size:28.4px;color:#111111;font-weight:700;">Customer Complaint Resolution</div>
<div class="b" style="left:1074.5px;top:381px;width:147.2px;height:40px;border-radius:20px;background:#fef2f2;border:2px solid #fbd5d5"></div>
<div class="t" style="left:1086.5px;top:389.3px;font-size:24.5px;color:#b91c1c;">Leadership</div>
<div class="t" style="left:1547px;top:387.3px;font-size:28px;color:#111827;">1.0</div>
<div class="t" style="left:1913.6999999999998px;top:387.3px;font-size:28px;color:#111827;">4h 10m</div>
<svg class="i" style="left:2179px;top:377px;width:48px;height:48px;" viewBox="0 0 24 24" fill="none" stroke="#2f9e44" stroke-width="1.6" stroke-linecap="round" stroke-linejoin="round"><path d="M9 12.75 11.25 15 15 9.75M21 12a9 9 0 1 1-18 0 9 9 0 0 1 18 0Z"/></svg>
<div class="b" style="left:0;top:571px;width:2540px;height:2px;background:#f1f2f4"></div>
<svg class="i" style="left:48px;top:495px;width:40px;height:40px;" viewBox="0 0 24 24" fill="none" stroke="#6b7280" stroke-width="1.6" stroke-linecap="round" stroke-linejoin="round"><path d="M2.036 12.322a1.012 1.012 0 0 1 0-.639C3.423 7.51 7.36 4.5 12 4.5c4.638 0 8.573 3.007 9.963 7.178.07.207.07.431 0 .639C20.577 16.49 16.64 19.5 12 19.5c-4.638 0-8.573-3.007-9.963-7.178Z M15 12a3 3 0 1 1-6 0 3 3 0 0 1 6 0Z"/></svg>
<div class="b" style="left:135px;top:499.5px;width:34px;height:34px;border-radius:8px;background:#fff;border:2px solid #d1d5db;box-shadow:0 1px 2px rgba(0,0,0,0.08)"></div>
<div class="t" style="left:217px;top:501.4px;font-size:28.4px;color:#111111;font-weight:700;">Gutter Installation Procedure</div>
<div class="b" style="left:1074.5px;top:495px;width:143.1px;height:40px;border-radius:20px;background:#eff6ff;border:2px solid #d4e2fd"></div>
<div class="t" style="left:1086.5px;top:503.3px;font-size:24.5px;color:#2754e6;">Production</div>
<div class="t" style="left:1547px;top:501.3px;font-size:28px;color:#111827;">2.5</div>
<div class="t" style="left:1913.6999999999998px;top:501.3px;font-size:28px;color:#111827;">6h 55m</div>
<svg class="i" style="left:2179px;top:491px;width:48px;height:48px;" viewBox="0 0 24 24" fill="none" stroke="#2f9e44" stroke-width="1.6" stroke-linecap="round" stroke-linejoin="round"><path d="M9 12.75 11.25 15 15 9.75M21 12a9 9 0 1 1-18 0 9 9 0 0 1 18 0Z"/></svg>
<div class="b" style="left:0;top:685px;width:2540px;height:2px;background:#f1f2f4"></div>
<svg class="i" style="left:48px;top:609px;width:40px;height:40px;" viewBox="0 0 24 24" fill="none" stroke="#6b7280" stroke-width="1.6" stroke-linecap="round" stroke-linejoin="round"><path d="M2.036 12.322a1.012 1.012 0 0 1 0-.639C3.423 7.51 7.36 4.5 12 4.5c4.638 0 8.573 3.007 9.963 7.178.07.207.07.431 0 .639C20.577 16.49 16.64 19.5 12 19.5c-4.638 0-8.573-3.007-9.963-7.178Z M15 12a3 3 0 1 1-6 0 3 3 0 0 1 6 0Z"/></svg>
<div class="b" style="left:135px;top:613.5px;width:34px;height:34px;border-radius:8px;background:#fff;border:2px solid #d1d5db;box-shadow:0 1px 2px rgba(0,0,0,0.08)"></div>
<div class="t" style="left:217px;top:615.4px;font-size:28.4px;color:#111111;font-weight:700;">Social Media Content Calendar</div>
<div class="b" style="left:1074.5px;top:609px;width:133.6px;height:40px;border-radius:20px;background:#fffbeb;border:2px solid #fbe7bd"></div>
<div class="t" style="left:1086.5px;top:617.3px;font-size:24.5px;color:#b45309;">Marketing</div>
<div class="t" style="left:1547px;top:615.3px;font-size:28px;color:#111827;">1.0</div>
<div class="t" style="left:1913.6999999999998px;top:615.3px;font-size:28px;color:#111827;">4h 40m</div>
<svg class="i" style="left:2179px;top:605px;width:48px;height:48px;" viewBox="0 0 24 24" fill="none" stroke="#2f9e44" stroke-width="1.6" stroke-linecap="round" stroke-linejoin="round"><path d="M9 12.75 11.25 15 15 9.75M21 12a9 9 0 1 1-18 0 9 9 0 0 1 18 0Z"/></svg>
<div class="b" style="left:0;top:799px;width:2540px;height:2px;background:#f1f2f4"></div>
<svg class="i" style="left:48px;top:723px;width:40px;height:40px;" viewBox="0 0 24 24" fill="none" stroke="#6b7280" stroke-width="1.6" stroke-linecap="round" stroke-linejoin="round"><path d="M2.036 12.322a1.012 1.012 0 0 1 0-.639C3.423 7.51 7.36 4.5 12 4.5c4.638 0 8.573 3.007 9.963 7.178.07.207.07.431 0 .639C20.577 16.49 16.64 19.5 12 19.5c-4.638 0-8.573-3.007-9.963-7.178Z M15 12a3 3 0 1 1-6 0 3 3 0 0 1 6 0Z"/></svg>
<div class="b" style="left:135px;top:727.5px;width:34px;height:34px;border-radius:8px;background:#fff;border:2px solid #d1d5db;box-shadow:0 1px 2px rgba(0,0,0,0.08)"></div>
<div class="t" style="left:217px;top:729.4px;font-size:28.4px;color:#111111;font-weight:700;">Monthly Financial Close</div>
<div class="b" style="left:1074.5px;top:723px;width:113.2px;height:40px;border-radius:20px;background:#fffbeb;border:2px solid #fbe7bd"></div>
<div class="t" style="left:1086.5px;top:731.3px;font-size:24.5px;color:#b45309;">Finance</div>
<div class="t" style="left:1547px;top:729.3px;font-size:28px;color:#111827;">2.0</div>
<div class="t" style="left:1913.6999999999998px;top:729.3px;font-size:28px;color:#111827;">9h 45m</div>
<svg class="i" style="left:2179px;top:719px;width:48px;height:48px;" viewBox="0 0 24 24" fill="none" stroke="#2f9e44" stroke-width="1.6" stroke-linecap="round" stroke-linejoin="round"><path d="M9 12.75 11.25 15 15 9.75M21 12a9 9 0 1 1-18 0 9 9 0 0 1 18 0Z"/></svg>
<div class="b" style="left:0;top:913px;width:2540px;height:2px;background:#f1f2f4"></div>
<svg class="i" style="left:48px;top:837px;width:40px;height:40px;" viewBox="0 0 24 24" fill="none" stroke="#6b7280" stroke-width="1.6" stroke-linecap="round" stroke-linejoin="round"><path d="M2.036 12.322a1.012 1.012 0 0 1 0-.639C3.423 7.51 7.36 4.5 12 4.5c4.638 0 8.573 3.007 9.963 7.178.07.207.07.431 0 .639C20.577 16.49 16.64 19.5 12 19.5c-4.638 0-8.573-3.007-9.963-7.178Z M15 12a3 3 0 1 1-6 0 3 3 0 0 1 6 0Z"/></svg>
<div class="b" style="left:135px;top:841.5px;width:34px;height:34px;border-radius:8px;background:#fff;border:2px solid #d1d5db;box-shadow:0 1px 2px rgba(0,0,0,0.08)"></div>
<div class="t" style="left:217px;top:843.4px;font-size:28.4px;color:#111111;font-weight:700;">Lead Follow-Up Process</div>
<div class="b" style="left:1074.5px;top:837px;width:87.3px;height:40px;border-radius:20px;background:#f0fdf4;border:2px solid #d3f2dc"></div>
<div class="t" style="left:1086.5px;top:845.3px;font-size:24.5px;color:#2b8040;">Sales</div>
<div class="t" style="left:1547px;top:843.3px;font-size:28px;color:#111827;">1.5</div>
<div class="t" style="left:1913.6999999999998px;top:843.3px;font-size:28px;color:#111827;">45m</div>
<svg class="i" style="left:2179px;top:833px;width:48px;height:48px;" viewBox="0 0 24 24" fill="none" stroke="#2f9e44" stroke-width="1.6" stroke-linecap="round" stroke-linejoin="round"><path d="M9 12.75 11.25 15 15 9.75M21 12a9 9 0 1 1-18 0 9 9 0 0 1 18 0Z"/></svg>
<div class="b" style="left:0;top:1027px;width:2540px;height:2px;background:#f1f2f4"></div>
<svg class="i" style="left:48px;top:951px;width:40px;height:40px;" viewBox="0 0 24 24" fill="none" stroke="#6b7280" stroke-width="1.6" stroke-linecap="round" stroke-linejoin="round"><path d="M2.036 12.322a1.012 1.012 0 0 1 0-.639C3.423 7.51 7.36 4.5 12 4.5c4.638 0 8.573 3.007 9.963 7.178.07.207.07.431 0 .639C20.577 16.49 16.64 19.5 12 19.5c-4.638 0-8.573-3.007-9.963-7.178Z M15 12a3 3 0 1 1-6 0 3 3 0 0 1 6 0Z"/></svg>
<div class="b" style="left:135px;top:955.5px;width:34px;height:34px;border-radius:8px;background:#fff;border:2px solid #d1d5db;box-shadow:0 1px 2px rgba(0,0,0,0.08)"></div>
<div class="t" style="left:217px;top:957.4px;font-size:28.4px;color:#111111;font-weight:700;">Shingle Replacement Installation</div>
<div class="b" style="left:1074.5px;top:951px;width:143.1px;height:40px;border-radius:20px;background:#eff6ff;border:2px solid #d4e2fd"></div>
<div class="t" style="left:1086.5px;top:959.3px;font-size:24.5px;color:#2754e6;">Production</div>
<div class="t" style="left:1547px;top:957.3px;font-size:28px;color:#111827;">4.0</div>
<div class="t" style="left:1913.6999999999998px;top:957.3px;font-size:28px;color:#111827;">16h 15m</div>
<svg class="i" style="left:2179px;top:947px;width:48px;height:48px;" viewBox="0 0 24 24" fill="none" stroke="#2f9e44" stroke-width="1.6" stroke-linecap="round" stroke-linejoin="round"><path d="M9 12.75 11.25 15 15 9.75M21 12a9 9 0 1 1-18 0 9 9 0 0 1 18 0Z"/></svg>
<div class="b" style="left:0;top:1141px;width:2540px;height:2px;background:#f1f2f4"></div>
<svg class="i" style="left:48px;top:1065px;width:40px;height:40px;" viewBox="0 0 24 24" fill="none" stroke="#6b7280" stroke-width="1.6" stroke-linecap="round" stroke-linejoin="round"><path d="M2.036 12.322a1.012 1.012 0 0 1 0-.639C3.423 7.51 7.36 4.5 12 4.5c4.638 0 8.573 3.007 9.963 7.178.07.207.07.431 0 .639C20.577 16.49 16.64 19.5 12 19.5c-4.638 0-8.573-3.007-9.963-7.178Z M15 12a3 3 0 1 1-6 0 3 3 0 0 1 6 0Z"/></svg>
<div class="b" style="left:135px;top:1069.5px;width:34px;height:34px;border-radius:8px;background:#fff;border:2px solid #d1d5db;box-shadow:0 1px 2px rgba(0,0,0,0.08)"></div>
<div class="t" style="left:217px;top:1071.4px;font-size:28.4px;color:#111111;font-weight:700;">New Employee Onboarding</div>
<div class="b" style="left:1074.5px;top:1065px;width:95.4px;height:40px;border-radius:20px;background:#fafafa;border:2px solid #e4e4e7"></div>
<div class="t" style="left:1086.5px;top:1073.3px;font-size:24.5px;color:#3f3f46;">Admin</div>
<div class="t" style="left:1547px;top:1071.3px;font-size:28px;color:#111827;">3.0</div>
<div class="t" style="left:1913.6999999999998px;top:1071.3px;font-size:28px;color:#111827;">2d 10h</div>
<svg class="i" style="left:2179px;top:1061px;width:48px;height:48px;" viewBox="0 0 24 24" fill="none" stroke="#2f9e44" stroke-width="1.6" stroke-linecap="round" stroke-linejoin="round"><path d="M9 12.75 11.25 15 15 9.75M21 12a9 9 0 1 1-18 0 9 9 0 0 1 18 0Z"/></svg>
<div class="b" style="left:0;top:1255px;width:2540px;height:2px;background:#f1f2f4"></div>
<svg class="i" style="left:48px;top:1179px;width:40px;height:40px;" viewBox="0 0 24 24" fill="none" stroke="#6b7280" stroke-width="1.6" stroke-linecap="round" stroke-linejoin="round"><path d="M2.036 12.322a1.012 1.012 0 0 1 0-.639C3.423 7.51 7.36 4.5 12 4.5c4.638 0 8.573 3.007 9.963 7.178.07.207.07.431 0 .639C20.577 16.49 16.64 19.5 12 19.5c-4.638 0-8.573-3.007-9.963-7.178Z M15 12a3 3 0 1 1-6 0 3 3 0 0 1 6 0Z"/></svg>
<div class="b" style="left:135px;top:1183.5px;width:34px;height:34px;border-radius:8px;background:#fff;border:2px solid #d1d5db;box-shadow:0 1px 2px rgba(0,0,0,0.08)"></div>
<div class="t" style="left:217px;top:1185.4px;font-size:28.4px;color:#111111;font-weight:700;">Roof Inspection Procedure</div>
<div class="b" style="left:1074.5px;top:1179px;width:87.3px;height:40px;border-radius:20px;background:#f0fdf4;border:2px solid #d3f2dc"></div>
<div class="t" style="left:1086.5px;top:1187.3px;font-size:24.5px;color:#2b8040;">Sales</div>
<div class="t" style="left:1547px;top:1185.3px;font-size:28px;color:#111827;">2.0</div>
<div class="t" style="left:1913.6999999999998px;top:1185.3px;font-size:28px;color:#111827;">2h 15m</div>
<svg class="i" style="left:2179px;top:1175px;width:48px;height:48px;" viewBox="0 0 24 24" fill="none" stroke="#2f9e44" stroke-width="1.6" stroke-linecap="round" stroke-linejoin="round"><path d="M9 12.75 11.25 15 15 9.75M21 12a9 9 0 1 1-18 0 9 9 0 0 1 18 0Z"/></svg>
<svg class="i" style="left:48px;top:1293px;width:40px;height:40px;" viewBox="0 0 24 24" fill="none" stroke="#6b7280" stroke-width="1.6" stroke-linecap="round" stroke-linejoin="round"><path d="M2.036 12.322a1.012 1.012 0 0 1 0-.639C3.423 7.51 7.36 4.5 12 4.5c4.638 0 8.573 3.007 9.963 7.178.07.207.07.431 0 .639C20.577 16.49 16.64 19.5 12 19.5c-4.638 0-8.573-3.007-9.963-7.178Z M15 12a3 3 0 1 1-6 0 3 3 0 0 1 6 0Z"/></svg>
<div class="b" style="left:135px;top:1297.5px;width:34px;height:34px;border-radius:8px;background:#fff;border:2px solid #d1d5db;box-shadow:0 1px 2px rgba(0,0,0,0.08)"></div>
<div class="t" style="left:217px;top:1299.4px;font-size:28.4px;color:#111111;font-weight:700;">Roof Inspection Procedure</div>
<div class="b" style="left:1074.5px;top:1293px;width:87.3px;height:40px;border-radius:20px;background:#f0fdf4;border:2px solid #d3f2dc"></div>
<div class="t" style="left:1086.5px;top:1301.3px;font-size:24.5px;color:#2b8040;">Sales</div>
<div class="t" style="left:1547px;top:1299.3px;font-size:28px;color:#111827;">2.0</div>
<div class="t" style="left:1913.6999999999998px;top:1299.3px;font-size:28px;color:#111827;">25m</div>
<svg class="i" style="left:2179px;top:1289px;width:48px;height:48px;" viewBox="0 0 24 24" fill="none" stroke="#2f9e44" stroke-width="1.6" stroke-linecap="round" stroke-linejoin="round"><path d="M9 12.75 11.25 15 15 9.75M21 12a9 9 0 1 1-18 0 9 9 0 0 1 18 0Z"/></svg>
<div class="b" style="left:0;top:1370px;width:2540px;height:2px;background:#e5e7eb"></div>
<div class="t" style="left:48.39999999999998px;top:1419.9px;font-size:29.7px;color:#374151;">Showing 1 to 9 of 9 results</div>
<div class="b" style="left:1122.6px;top:1397px;width:293px;height:76px;border-radius:16px;background:#fff;border:2px solid #e5e7eb"></div>
<div class="t" style="left:1147.7px;top:1420.5px;font-size:29px;color:#6b7280;">Per page</div>
<div class="t" style="left:1314px;top:1420.5px;font-size:29px;color:#111827;">10</div>
</div>
</body></html>
